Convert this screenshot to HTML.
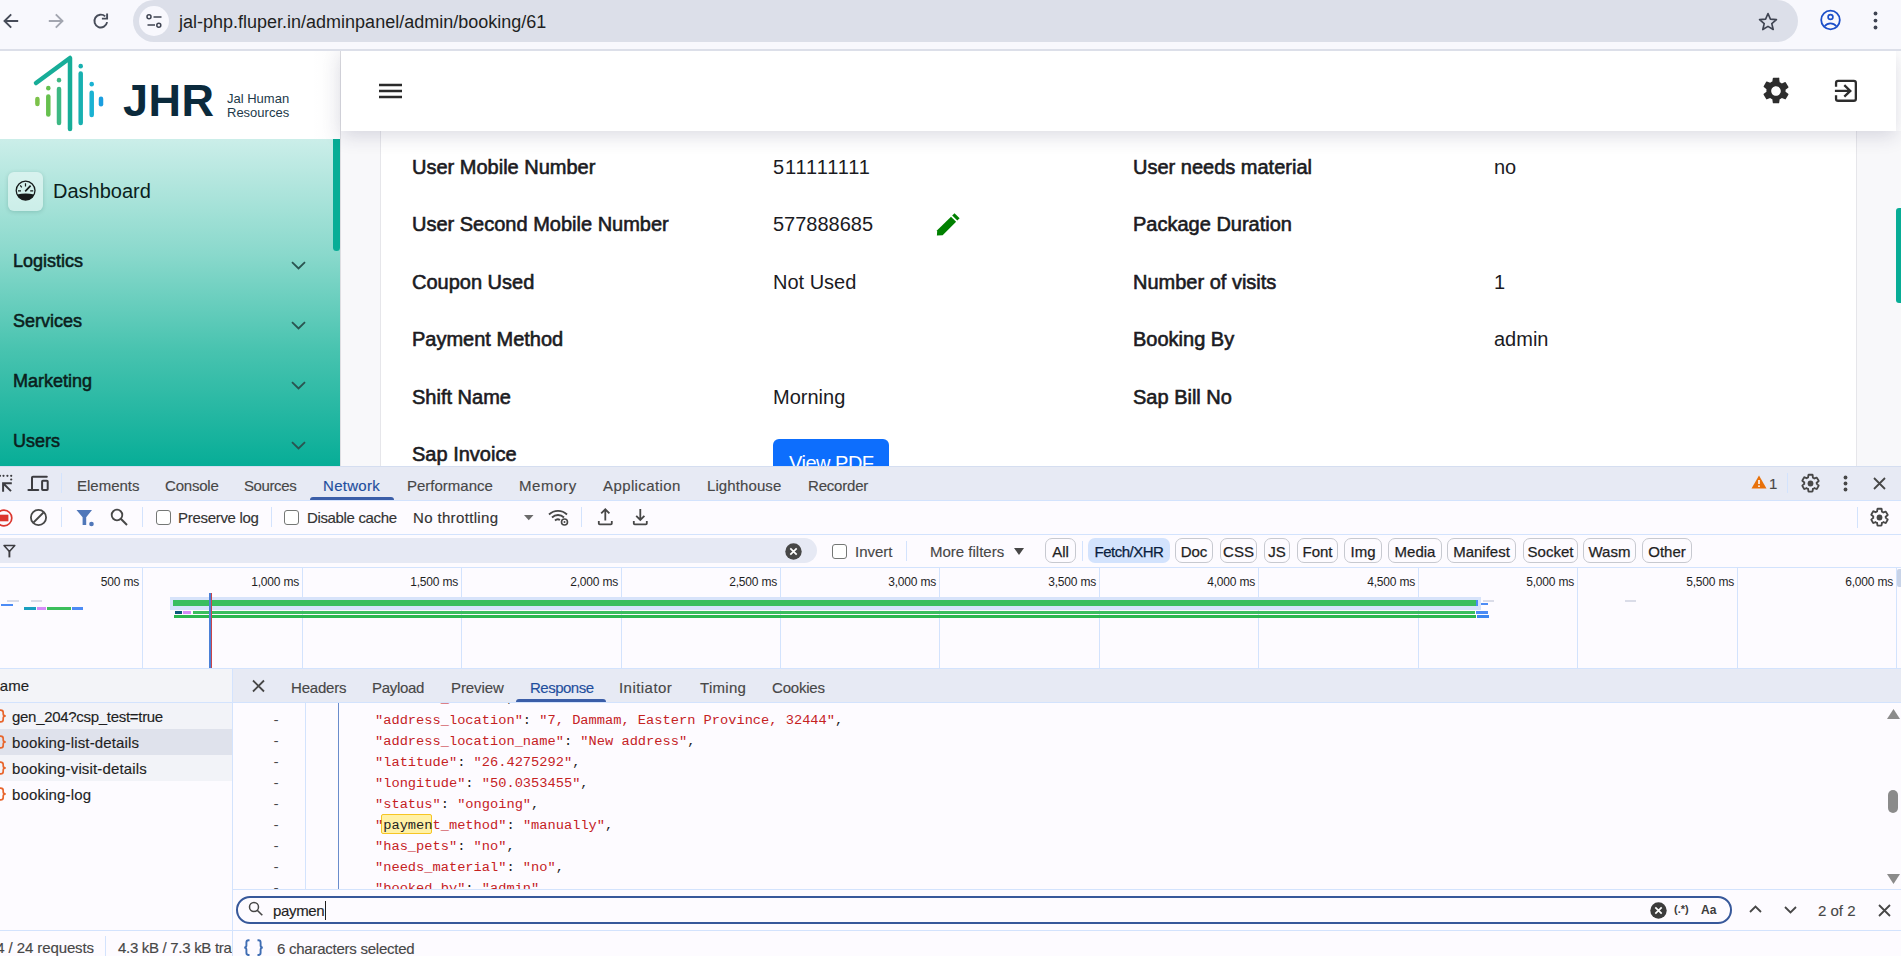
<!DOCTYPE html>
<html><head><meta charset="utf-8">
<style>
*{box-sizing:border-box}
html,body{margin:0;padding:0}
body{width:1901px;height:956px;position:relative;overflow:hidden;background:#fff;font-family:"Liberation Sans",sans-serif;color:#1f1f1f}
.a{position:absolute}
.t{position:absolute;white-space:nowrap;line-height:1}
svg{position:absolute;overflow:visible}
/* chrome */
#chrome{left:0;top:0;width:1901px;height:51px;background:#f8f8fd;border-bottom:2px solid #dcdfe9}
#pill{left:133px;top:0;width:1665px;height:42px;border-radius:21px;background:#dcdfe9}
#site{left:139px;top:6px;width:30px;height:30px;border-radius:15px;background:#f8f8fd}
/* page */
#side{left:0;top:51px;width:340px;height:415px;background:#fff}
#sidegrad{left:0;top:139px;width:340px;height:327px;background:linear-gradient(180deg,#cbeee9 0%,#8ad9cc 35%,#47c3af 65%,#07ad97 100%)}
#sidethumb{left:333px;top:139px;width:7px;height:112px;background:#08ad96;border-radius:0 0 4px 4px}
#sideborder{left:340px;top:51px;width:1px;height:415px;background:#dedee2}
#content{left:341px;top:131px;width:1560px;height:335px;background:#f8f8fa}
#header{left:341px;top:51px;width:1555px;height:80px;background:#fff;box-shadow:0 5px 18px rgba(40,40,80,.16);clip-path:inset(0 -30px -40px -30px)}
#card{left:380px;top:131px;width:1477px;height:335px;background:#fff;border-left:1px solid #e6e6ea;border-right:1px solid #e6e6ea}
#pagethumb{left:1896px;top:208px;width:5px;height:95px;background:#08ad96;border-radius:3px 0 0 3px}
.lab{font-size:20px;color:#1b1b1f;-webkit-text-stroke:0.6px #1b1b1f;margin-top:-1px}
.val{font-size:20px;color:#1b1b1f}
.nav{font-size:18px;color:#0b1e1d;-webkit-text-stroke:0.55px #0b1e1d}
/* devtools */
#dt{left:0;top:466px;width:1901px;height:490px;background:#fdfbff}
.dtt{font-size:15px;color:#474747;-webkit-text-stroke:0.15px currentColor}
.bor{background:#d3e3fd}
</style></head><body>

<!-- ============ CHROME ============ -->
<div class="a" id="chrome"></div>
<div class="a" id="pill"></div>
<div class="a" id="site"></div>
<div class="t" style="left:179px;top:13px;font-size:18px;color:#1f1f1f">jal-php.fluper.in/adminpanel/admin/booking/61</div>

<!-- chrome icons -->
<svg style="left:3px;top:12.5px" width="16" height="16" viewBox="0 0 16 16"><path d="M15.2 8H1.8M8.2 1.3L1.5 8L8.2 14.7" stroke="#474c59" stroke-width="1.9" fill="none"/></svg>
<svg style="left:47.5px;top:12.5px" width="16" height="16" viewBox="0 0 16 16"><path d="M0.8 8H14.2M7.8 1.3L14.5 8L7.8 14.7" stroke="#a3a6b0" stroke-width="1.9" fill="none"/></svg>
<svg style="left:93px;top:12.5px" width="16" height="16" viewBox="0 0 16 16"><path d="M14.1 9.2A6.4 6.4 0 1 1 12.2 3.4" stroke="#474c59" stroke-width="1.9" fill="none"/><path d="M14.1 0.4V5.6H8.9" stroke="#474c59" stroke-width="1.9" fill="none"/></svg>
<svg style="left:146px;top:14px" width="17" height="15" viewBox="0 0 17 15"><circle cx="3" cy="2.8" r="2" fill="none" stroke="#3f4452" stroke-width="1.5"/><path d="M7.5 3H15.5M1.5 11H9" stroke="#3f4452" stroke-width="1.6"/><circle cx="12.8" cy="11.3" r="2" fill="none" stroke="#3f4452" stroke-width="1.5"/></svg>
<svg style="left:1758px;top:12px" width="20" height="19" viewBox="0 0 24 23"><path d="M12 1.8L14.9 8.6L22.2 9.2L16.6 14L18.3 21.2L12 17.4L5.7 21.2L7.4 14L1.8 9.2L9.1 8.6Z" fill="none" stroke="#3f4452" stroke-width="2" stroke-linejoin="round"/></svg>
<svg style="left:1819px;top:9px" width="23" height="23" viewBox="0 0 23 23"><circle cx="11.5" cy="11" r="9.3" fill="none" stroke="#1c4fc9" stroke-width="1.8"/><circle cx="11.5" cy="8" r="2.4" fill="none" stroke="#1c4fc9" stroke-width="1.7"/><path d="M5.6 17.3C7.3 15.3 9.3 14.4 11.5 14.4S15.7 15.3 17.4 17.3" fill="none" stroke="#1c4fc9" stroke-width="1.7"/></svg>
<svg style="left:1872px;top:11px" width="7" height="20" viewBox="0 0 7 20"><circle cx="3.5" cy="2.5" r="1.9" fill="#3f4452"/><circle cx="3.5" cy="9.6" r="1.9" fill="#3f4452"/><circle cx="3.5" cy="16.5" r="1.9" fill="#3f4452"/></svg>

<!-- ============ PAGE ============ -->
<div class="a" id="side"></div>
<div class="a" id="sidegrad"></div>
<div class="a" id="sidethumb"></div>
<div class="a" style="left:310px;top:51px;width:30px;height:88px;background:linear-gradient(90deg,rgba(0,0,0,0),rgba(40,40,70,.015))"></div>
<div class="a" id="sideborder"></div>
<div class="a" id="content"></div>
<div class="a" id="card"></div>
<div class="a" id="header"></div>
<div class="a" id="pagethumb"></div>

<!-- logo svg -->
<svg style="left:0;top:50px" width="120" height="90" viewBox="0 50 120 90">
<g stroke-linecap="round" stroke-linejoin="round" fill="none" stroke-width="4.5">
<path d="M36 83L70 58V129" stroke="#17ad98"/>
<path d="M37.4 99V104" stroke="#7cc24a"/>
<path d="M48.3 88V88.2" stroke="#66c04e"/><path d="M48.3 96.5V114.5" stroke="#66c04e"/>
<path d="M59 80V80.2" stroke="#3db884"/><path d="M59 89V123" stroke="#3db884"/>
<path d="M80.7 66V66.2" stroke="#18b0b0"/><path d="M80.7 73.5V123" stroke="#18b0b0"/>
<path d="M91.7 84V84.2" stroke="#1ab2d2"/><path d="M91.7 92.7V115" stroke="#1ab2d2"/>
<path d="M101 98.8V104.3" stroke="#1a9ee0"/>
</g></svg>
<!-- logo text -->
<div class="t" style="left:123px;top:78px;font-size:45px;font-weight:bold;color:#0b2a3c;letter-spacing:0.5px">JHR</div>
<div class="t" style="left:227px;top:92px;font-size:13px;color:#223a4a">Jal Human</div>
<div class="t" style="left:227px;top:106px;font-size:13px;color:#223a4a">Resources</div>

<!-- sidebar -->
<div class="a" style="left:8px;top:172px;width:35px;height:39px;border-radius:6px;background:rgba(255,255,255,.45);box-shadow:0 1px 4px rgba(0,60,50,.18)"></div>
<div class="t" style="left:53px;top:181px;font-size:20px;color:#0b1e1d">Dashboard</div>
<div class="t nav" style="left:13px;top:252px">Logistics</div>
<div class="t nav" style="left:13px;top:312px">Services</div>
<div class="t nav" style="left:13px;top:372px">Marketing</div>
<div class="t nav" style="left:13px;top:432px">Users</div>

<!-- header icons -->
<svg style="left:378px;top:82px" width="25" height="18" viewBox="0 0 25 18"><path d="M1 3H24M1 9H24M1 15H24" stroke="#2a2a2a" stroke-width="2.5"/></svg>
<svg style="left:1760px;top:75px" width="32" height="32" viewBox="0 0 24 24"><path fill="#2d2d2d" d="M19.14 12.94c.04-.3.06-.61.06-.94s-.02-.64-.07-.94l2.03-1.58a.49.49 0 0 0 .12-.61l-1.92-3.32a.49.49 0 0 0-.59-.22l-2.39.96c-.5-.38-1.03-.7-1.62-.94l-.36-2.54A.48.48 0 0 0 13.92 2h-3.84c-.24 0-.43.17-.47.41l-.36 2.54c-.59.24-1.13.57-1.62.94l-2.39-.96a.48.48 0 0 0-.59.22L2.74 8.47c-.12.21-.08.47.12.61l2.03 1.58c-.05.3-.09.63-.09.94s.02.64.07.94l-2.03 1.58a.49.49 0 0 0-.12.61l1.92 3.32c.12.22.37.29.59.22l2.39-.96c.5.38 1.03.7 1.62.94l.36 2.54c.05.24.24.41.48.41h3.84c.24 0 .44-.17.47-.41l.36-2.54c.59-.24 1.13-.56 1.62-.94l2.39.96c.22.08.47 0 .59-.22l1.92-3.32c.12-.22.07-.47-.12-.61l-2.01-1.58zM12 15.6c-1.98 0-3.6-1.62-3.6-3.6s1.62-3.6 3.6-3.6 3.6 1.62 3.6 3.6-1.62 3.6-3.6 3.6z"/></svg>
<svg style="left:1832px;top:79px" width="27" height="25" viewBox="0 0 27 25"><path d="M2.9 11.9H18.4M12.3 6.1L18.3 11.9L12.3 17.7" stroke="#2d2d2d" stroke-width="2.3" fill="none"/><path d="M4.05 7.8V4Q4.05 1.95 6.1 1.95H21.8Q23.85 1.95 23.85 4V19.7Q23.85 21.75 21.8 21.75H6.1Q4.05 21.75 4.05 19.7V16.2" stroke="#2d2d2d" stroke-width="2.3" fill="none"/></svg>
<!-- sidebar icons -->
<svg style="left:15px;top:180px" width="22" height="22" viewBox="0 0 22 22"><circle cx="10.6" cy="10.6" r="9.4" fill="none" stroke="#161b1b" stroke-width="1.3"/><path d="M2.1 14.6Q10.6 12.4 19.1 14.6A9.4 9.4 0 0 1 2.1 14.6Z" fill="#161b1b"/><path d="M10.2 11.4L15.6 5.6" stroke="#161b1b" stroke-width="1.6"/><path d="M3 10.8H6M15.2 10.8H18.2M10.5 3.2V6.4M5.2 5.4L6.8 7.4" stroke="#161b1b" stroke-width="1.2"/></svg>
<svg style="left:291px;top:261px" width="15" height="9" viewBox="0 0 15 9"><path d="M1 1.2L7.5 7.5L14 1.2" stroke="#2a5450" stroke-width="1.8" fill="none"/></svg>
<svg style="left:291px;top:321px" width="15" height="9" viewBox="0 0 15 9"><path d="M1 1.2L7.5 7.5L14 1.2" stroke="#2a5450" stroke-width="1.8" fill="none"/></svg>
<svg style="left:291px;top:381px" width="15" height="9" viewBox="0 0 15 9"><path d="M1 1.2L7.5 7.5L14 1.2" stroke="#2a5450" stroke-width="1.8" fill="none"/></svg>
<svg style="left:291px;top:441px" width="15" height="9" viewBox="0 0 15 9"><path d="M1 1.2L7.5 7.5L14 1.2" stroke="#2a5450" stroke-width="1.8" fill="none"/></svg>
<!-- pencil -->
<svg style="left:936px;top:212px" width="25" height="24" viewBox="0 0 25 24"><path d="M18.5 1.2L23.6 6.3L21.3 8.6L16.2 3.5Z" fill="#008000"/><path d="M15 4.7L20.1 9.8L6.6 23.3L0.9 23.6L1.2 18.2Z" fill="#008000"/><path d="M1.5 21L3.4 23" stroke="#fff" stroke-width="0"/></svg>
<!-- card rows -->
<div class="t lab" style="left:412px;top:158px">User Mobile Number</div>
<div class="t val" style="left:773px;top:157px;letter-spacing:0.9px">511111111</div>
<div class="t lab" style="left:1133px;top:158px">User needs material</div>
<div class="t val" style="left:1494px;top:157px">no</div>

<div class="t lab" style="left:412px;top:215px">User Second Mobile Number</div>
<div class="t val" style="left:773px;top:214px">577888685</div>
<div class="t lab" style="left:1133px;top:215px">Package Duration</div>

<div class="t lab" style="left:412px;top:273px">Coupon Used</div>
<div class="t val" style="left:773px;top:272px">Not Used</div>
<div class="t lab" style="left:1133px;top:273px">Number of visits</div>
<div class="t val" style="left:1494px;top:272px">1</div>

<div class="t lab" style="left:412px;top:330px">Payment Method</div>
<div class="t lab" style="left:1133px;top:330px">Booking By</div>
<div class="t val" style="left:1494px;top:329px">admin</div>

<div class="t lab" style="left:412px;top:388px">Shift Name</div>
<div class="t val" style="left:773px;top:387px">Morning</div>
<div class="t lab" style="left:1133px;top:388px">Sap Bill No</div>

<div class="t lab" style="left:412px;top:445px">Sap Invoice</div>
<div class="a" style="left:773px;top:439px;width:116px;height:40px;border-radius:6px;background:#0d6efd"></div>
<div class="t" style="left:789px;top:453px;font-size:20px;color:#fff;letter-spacing:-0.5px">View PDF</div>

<!-- ============ DEVTOOLS ============ -->
<div class="a" id="dt"></div>
<!-- main tab bar -->
<div class="a" style="left:0;top:466px;width:1901px;height:34px;background:#e7eaf4"></div>
<div class="a" style="left:0;top:466px;width:1901px;height:1px;background:#d5def0"></div>
<div class="a bor" style="left:0;top:500px;width:1901px;height:1px"></div>
<!-- inspect icon -->
<svg style="left:0;top:470px" width="16" height="24" viewBox="0 0 16 24"><g fill="#3c3c40"><circle cx="0" cy="5.8" r="1.1"/><circle cx="3.5" cy="5.8" r="1.1"/><circle cx="7.4" cy="5.8" r="1.1"/><circle cx="11.2" cy="5.8" r="1.1"/><circle cx="11.2" cy="9.5" r="1.1"/></g><path d="M11.8 13.2H3.1V21.8M3.6 13.7L11 21.1" stroke="#3c3c40" stroke-width="2" fill="none"/></svg>
<!-- device icon -->
<svg style="left:28px;top:470px" width="24" height="24" viewBox="0 0 24 24"><path d="M4 20V7.5Q4 6.8 5 6.8H18.8" stroke="#3c3c40" stroke-width="2" fill="none" stroke-linecap="round"/><path d="M0.5 20H10.2" stroke="#3c3c40" stroke-width="2.2" stroke-linecap="round"/><rect x="14.1" y="10.8" width="5.6" height="9.2" rx="0.8" stroke="#3c3c40" stroke-width="2" fill="none"/></svg>
<div class="a bor" style="left:61px;top:473px;width:1px;height:20px"></div>
<div class="t dtt" style="left:77px;top:478px">Elements</div>
<div class="t dtt" style="left:165px;top:478px;letter-spacing:-0.2px">Console</div>
<div class="t dtt" style="left:244px;top:478px;letter-spacing:-0.4px">Sources</div>
<div class="t dtt" style="left:323px;top:478px;color:#1f4f9e;letter-spacing:0.3px">Network</div>
<div class="a" style="left:310px;top:497px;width:84px;height:3px;background:#3b5ea8;border-radius:3px 3px 0 0"></div>
<div class="t dtt" style="left:407px;top:478px">Performance</div>
<div class="t dtt" style="left:519px;top:478px;letter-spacing:0.6px">Memory</div>
<div class="t dtt" style="left:603px;top:478px;letter-spacing:0.4px">Application</div>
<div class="t dtt" style="left:707px;top:478px;letter-spacing:0.1px">Lighthouse</div>
<div class="t dtt" style="left:808px;top:478px;letter-spacing:-0.2px">Recorder</div>
<!-- right icons -->
<svg style="left:1750.5px;top:475px" width="16" height="14" viewBox="0 0 16 14"><path d="M8 0.5L15.5 13.5H0.5Z" fill="#e8710a"/><path d="M8 5v4" stroke="#fff" stroke-width="1.6"/><circle cx="8" cy="11.2" r="0.9" fill="#fff"/></svg>
<div class="t dtt" style="left:1769px;top:476px">1</div>
<div class="a bor" style="left:1787px;top:473px;width:1px;height:20px"></div>
<svg style="left:1800px;top:473px" width="21" height="21" viewBox="0 0 24 24"><path fill="none" stroke="#474747" stroke-width="2.1" d="M19.14 12.94c.04-.3.06-.61.06-.94s-.02-.64-.07-.94l2.03-1.58a.49.49 0 0 0 .12-.61l-1.92-3.32a.49.49 0 0 0-.59-.22l-2.39.96c-.5-.38-1.03-.7-1.62-.94l-.36-2.54A.48.48 0 0 0 13.92 2h-3.84c-.24 0-.43.17-.47.41l-.36 2.54c-.59.24-1.13.57-1.62.94l-2.39-.96a.48.48 0 0 0-.59.22L2.74 8.47c-.12.21-.08.47.12.61l2.03 1.58c-.05.3-.09.63-.09.94s.02.64.07.94l-2.03 1.58a.49.49 0 0 0-.12.61l1.92 3.32c.12.22.37.29.59.22l2.39-.96c.5.38 1.03.7 1.62.94l.36 2.54c.05.24.24.41.48.41h3.84c.24 0 .44-.17.47-.41l.36-2.54c.59-.24 1.13-.56 1.62-.94l2.39.96c.22.08.47 0 .59-.22l1.92-3.32c.12-.22.07-.47-.12-.61l-2.01-1.58z"/><circle cx="12" cy="12" r="3.3" fill="#474747"/></svg>
<svg style="left:1843px;top:475px" width="5" height="17" viewBox="0 0 5 17"><circle cx="2.5" cy="2.5" r="1.9" fill="#474747"/><circle cx="2.5" cy="8.5" r="1.9" fill="#474747"/><circle cx="2.5" cy="14.5" r="1.9" fill="#474747"/></svg>
<svg style="left:1873px;top:477px" width="13" height="13" viewBox="0 0 13 13"><path d="M1 1L12 12M12 1L1 12" stroke="#474747" stroke-width="1.8"/></svg>

<!-- toolbar -->
<div class="a bor" style="left:0;top:534px;width:1901px;height:1px"></div>
<svg style="left:-5.5px;top:509px" width="18" height="18" viewBox="0 0 18 18"><circle cx="9" cy="9" r="7.8" fill="none" stroke="#dc362e" stroke-width="1.7"/><rect x="4.6" y="5.7" width="8.8" height="6.6" fill="#dc362e"/></svg>
<svg style="left:30px;top:509px" width="18" height="18" viewBox="0 0 18 18"><circle cx="8.5" cy="8.5" r="7.6" fill="none" stroke="#474747" stroke-width="1.8"/><path d="M3.5 13.5L13.5 3.5" stroke="#474747" stroke-width="1.8"/></svg>
<div class="a bor" style="left:61px;top:507px;width:1px;height:20px"></div>
<svg style="left:76px;top:509px" width="19" height="18" viewBox="0 0 19 18"><path d="M0.5 1H16L10.2 8.2V16H6.6V8.2Z" fill="#5077b9"/><circle cx="15.5" cy="15" r="2.3" fill="#5077b9"/></svg>
<svg style="left:110px;top:508px" width="18" height="18" viewBox="0 0 18 18"><circle cx="7" cy="7" r="5.3" fill="none" stroke="#474747" stroke-width="1.8"/><path d="M10.8 10.8L17 17" stroke="#474747" stroke-width="2"/></svg>
<div class="a bor" style="left:142px;top:507px;width:1px;height:20px"></div>
<div class="a" style="left:156px;top:510px;width:15px;height:15px;border:1.4px solid #747775;border-radius:3px;background:#fff"></div>
<div class="t dtt" style="left:178px;top:510px;color:#333;letter-spacing:-0.3px">Preserve log</div>
<div class="a bor" style="left:271px;top:507px;width:1px;height:20px"></div>
<div class="a" style="left:284px;top:510px;width:15px;height:15px;border:1.4px solid #747775;border-radius:3px;background:#fff"></div>
<div class="t dtt" style="left:307px;top:510px;color:#333;letter-spacing:-0.35px">Disable cache</div>
<div class="t dtt" style="left:413px;top:510px;color:#333;letter-spacing:0.35px">No throttling</div>
<svg style="left:524px;top:515px" width="10" height="6" viewBox="0 0 10 6"><path d="M0 0H9.5L4.75 5.2Z" fill="#6b6b6b"/></svg>
<svg style="left:548px;top:508px" width="22" height="18" viewBox="0 0 22 18"><path d="M1 6.5A13 13 0 0 1 19 6.5M4 9.5A8.5 8.5 0 0 1 16 9.5M7 12.5A4 4 0 0 1 12 12" stroke="#474747" stroke-width="1.8" fill="none"/><circle cx="16.5" cy="14" r="3" fill="none" stroke="#474747" stroke-width="1.6"/><circle cx="16.5" cy="14" r="1" fill="#474747"/></svg>
<div class="a bor" style="left:581px;top:507px;width:1px;height:20px"></div>
<svg style="left:596px;top:507px" width="18" height="20" viewBox="0 0 18 20"><path d="M9.3 2.6V13.6M5.2 6.4L9.3 2.3L13.4 6.4" stroke="#474747" stroke-width="1.8" fill="none"/><path d="M2.8 14V16.5Q2.8 17.4 3.7 17.4H14.9Q15.8 17.4 15.8 16.5V14" stroke="#474747" stroke-width="1.8" fill="none"/></svg>
<svg style="left:631px;top:507px" width="18" height="20" viewBox="0 0 18 20"><path d="M9.3 2V12.8M5.2 8.9L9.3 13L13.4 8.9" stroke="#474747" stroke-width="1.8" fill="none"/><path d="M2.8 14V16.5Q2.8 17.4 3.7 17.4H14.9Q15.8 17.4 15.8 16.5V14" stroke="#474747" stroke-width="1.8" fill="none"/></svg>
<div class="a bor" style="left:1857px;top:507px;width:1px;height:21px"></div>
<svg style="left:1869px;top:507px" width="21" height="21" viewBox="0 0 24 24"><path fill="none" stroke="#474747" stroke-width="2.1" d="M19.14 12.94c.04-.3.06-.61.06-.94s-.02-.64-.07-.94l2.03-1.58a.49.49 0 0 0 .12-.61l-1.92-3.32a.49.49 0 0 0-.59-.22l-2.39.96c-.5-.38-1.03-.7-1.62-.94l-.36-2.54A.48.48 0 0 0 13.92 2h-3.84c-.24 0-.43.17-.47.41l-.36 2.54c-.59.24-1.13.57-1.62.94l-2.39-.96a.48.48 0 0 0-.59.22L2.74 8.47c-.12.21-.08.47.12.61l2.03 1.58c-.05.3-.09.63-.09.94s.02.64.07.94l-2.03 1.58a.49.49 0 0 0-.12.61l1.92 3.32c.12.22.37.29.59.22l2.39-.96c.5.38 1.03.7 1.62.94l.36 2.54c.05.24.24.41.48.41h3.84c.24 0 .44-.17.47-.41l.36-2.54c.59-.24 1.13-.56 1.62-.94l2.39.96c.22.08.47 0 .59-.22l1.92-3.32c.12-.22.07-.47-.12-.61l-2.01-1.58z"/><circle cx="12" cy="12" r="3.3" fill="#474747"/></svg>

<!-- filter row -->
<div class="a bor" style="left:0;top:567px;width:1901px;height:1px"></div>
<div class="a" style="left:-20px;top:538px;width:837px;height:25px;border-radius:12.5px;background:#e6e9f4"></div>
<svg style="left:3px;top:544px" width="13" height="14" viewBox="0 0 13 14"><path d="M1 1.5H11.8L6.4 7.6Z" stroke="#3c3c40" stroke-width="1.5" fill="none" stroke-linejoin="round"/><path d="M6.4 7.2V13.4" stroke="#3c3c40" stroke-width="1.9"/></svg>
<svg style="left:785px;top:543px" width="17" height="17" viewBox="0 0 17 17"><circle cx="8.5" cy="8.5" r="8.2" fill="#474747"/><path d="M5.3 5.3L11.7 11.7M11.7 5.3L5.3 11.7" stroke="#fff" stroke-width="1.7"/></svg>
<div class="a" style="left:832px;top:544px;width:15px;height:15px;border:1.4px solid #747775;border-radius:3px;background:#fff"></div>
<div class="t dtt" style="left:855px;top:544px;color:#474747">Invert</div>
<div class="a bor" style="left:906px;top:541px;width:1px;height:20px"></div>
<div class="t dtt" style="left:930px;top:544px;color:#474747">More filters</div>
<svg style="left:1014px;top:548px" width="10" height="7" viewBox="0 0 10 7"><path d="M0 0H10L5 7Z" fill="#474747"/></svg>
<div class="a bor" style="left:1082px;top:541px;width:1px;height:20px"></div>
<div class="a" style="left:1045px;top:538px;width:31px;height:25px;border-radius:7px;border:1px solid #c7c9d0;color:#1f1f1f;font-size:15px;line-height:25px;text-align:center;-webkit-text-stroke:0.25px #1f1f1f">All</div>
<div class="a" style="left:1088px;top:538px;width:82px;height:25px;border-radius:7px;background:#d3e3fd;color:#0a1e3f;font-size:15px;line-height:27px;text-align:center;letter-spacing:-0.5px;-webkit-text-stroke:0.25px #0a1e3f">Fetch/XHR</div>
<div class="a" style="left:1175px;top:538px;width:38px;height:25px;border-radius:7px;border:1px solid #c7c9d0;color:#1f1f1f;font-size:15px;line-height:25px;text-align:center;-webkit-text-stroke:0.25px #1f1f1f">Doc</div>
<div class="a" style="left:1220px;top:538px;width:37px;height:25px;border-radius:7px;border:1px solid #c7c9d0;color:#1f1f1f;font-size:15px;line-height:25px;text-align:center;-webkit-text-stroke:0.25px #1f1f1f">CSS</div>
<div class="a" style="left:1264px;top:538px;width:26px;height:25px;border-radius:7px;border:1px solid #c7c9d0;color:#1f1f1f;font-size:15px;line-height:25px;text-align:center;-webkit-text-stroke:0.25px #1f1f1f">JS</div>
<div class="a" style="left:1297px;top:538px;width:41px;height:25px;border-radius:7px;border:1px solid #c7c9d0;color:#1f1f1f;font-size:15px;line-height:25px;text-align:center;-webkit-text-stroke:0.25px #1f1f1f">Font</div>
<div class="a" style="left:1344px;top:538px;width:38px;height:25px;border-radius:7px;border:1px solid #c7c9d0;color:#1f1f1f;font-size:15px;line-height:25px;text-align:center;-webkit-text-stroke:0.25px #1f1f1f">Img</div>
<div class="a" style="left:1388px;top:538px;width:54px;height:25px;border-radius:7px;border:1px solid #c7c9d0;color:#1f1f1f;font-size:15px;line-height:25px;text-align:center;-webkit-text-stroke:0.25px #1f1f1f">Media</div>
<div class="a" style="left:1447px;top:538px;width:69px;height:25px;border-radius:7px;border:1px solid #c7c9d0;color:#1f1f1f;font-size:15px;line-height:25px;text-align:center;-webkit-text-stroke:0.25px #1f1f1f">Manifest</div>
<div class="a" style="left:1523px;top:538px;width:55px;height:25px;border-radius:7px;border:1px solid #c7c9d0;color:#1f1f1f;font-size:15px;line-height:25px;text-align:center;-webkit-text-stroke:0.25px #1f1f1f">Socket</div>
<div class="a" style="left:1583px;top:538px;width:53px;height:25px;border-radius:7px;border:1px solid #c7c9d0;color:#1f1f1f;font-size:15px;line-height:25px;text-align:center;-webkit-text-stroke:0.25px #1f1f1f">Wasm</div>
<div class="a" style="left:1642px;top:538px;width:50px;height:25px;border-radius:7px;border:1px solid #c7c9d0;color:#1f1f1f;font-size:15px;line-height:25px;text-align:center;-webkit-text-stroke:0.25px #1f1f1f">Other</div>
<!-- timeline -->
<div class="a bor" style="left:0;top:668px;width:1901px;height:1px"></div>
<div class="a" style="left:142px;top:568px;width:1px;height:100px;background:#d3e3fd"></div>
<div class="t" style="right:1762px;top:576px;font-size:12px;color:#1f1f1f;letter-spacing:-0.2px">500 ms</div>
<div class="a" style="left:302px;top:568px;width:1px;height:100px;background:#d3e3fd"></div>
<div class="t" style="right:1602px;top:576px;font-size:12px;color:#1f1f1f;letter-spacing:-0.2px">1,000 ms</div>
<div class="a" style="left:461px;top:568px;width:1px;height:100px;background:#d3e3fd"></div>
<div class="t" style="right:1443px;top:576px;font-size:12px;color:#1f1f1f;letter-spacing:-0.2px">1,500 ms</div>
<div class="a" style="left:621px;top:568px;width:1px;height:100px;background:#d3e3fd"></div>
<div class="t" style="right:1283px;top:576px;font-size:12px;color:#1f1f1f;letter-spacing:-0.2px">2,000 ms</div>
<div class="a" style="left:780px;top:568px;width:1px;height:100px;background:#d3e3fd"></div>
<div class="t" style="right:1124px;top:576px;font-size:12px;color:#1f1f1f;letter-spacing:-0.2px">2,500 ms</div>
<div class="a" style="left:939px;top:568px;width:1px;height:100px;background:#d3e3fd"></div>
<div class="t" style="right:965px;top:576px;font-size:12px;color:#1f1f1f;letter-spacing:-0.2px">3,000 ms</div>
<div class="a" style="left:1099px;top:568px;width:1px;height:100px;background:#d3e3fd"></div>
<div class="t" style="right:805px;top:576px;font-size:12px;color:#1f1f1f;letter-spacing:-0.2px">3,500 ms</div>
<div class="a" style="left:1258px;top:568px;width:1px;height:100px;background:#d3e3fd"></div>
<div class="t" style="right:646px;top:576px;font-size:12px;color:#1f1f1f;letter-spacing:-0.2px">4,000 ms</div>
<div class="a" style="left:1418px;top:568px;width:1px;height:100px;background:#d3e3fd"></div>
<div class="t" style="right:486px;top:576px;font-size:12px;color:#1f1f1f;letter-spacing:-0.2px">4,500 ms</div>
<div class="a" style="left:1577px;top:568px;width:1px;height:100px;background:#d3e3fd"></div>
<div class="t" style="right:327px;top:576px;font-size:12px;color:#1f1f1f;letter-spacing:-0.2px">5,000 ms</div>
<div class="a" style="left:1737px;top:568px;width:1px;height:100px;background:#d3e3fd"></div>
<div class="t" style="right:167px;top:576px;font-size:12px;color:#1f1f1f;letter-spacing:-0.2px">5,500 ms</div>
<div class="a" style="left:1896px;top:568px;width:1px;height:100px;background:#d3e3fd"></div>
<div class="t" style="right:8px;top:576px;font-size:12px;color:#1f1f1f;letter-spacing:-0.2px">6,000 ms</div>

<div class="a" style="left:7px;top:600px;width:12px;height:2px;background:#dadce8"></div>
<div class="a" style="left:30.5px;top:600px;width:11.5px;height:2px;background:#dadce8"></div>
<div class="a" style="left:1px;top:603.5px;width:11.8px;height:2.5px;background:#4c8bf5"></div>
<div class="a" style="left:24px;top:607px;width:12px;height:3px;background:#1a9fbf"></div>
<div class="a" style="left:37px;top:607px;width:9px;height:3px;background:#d58cf7"></div>
<div class="a" style="left:47px;top:607px;width:24px;height:3px;background:#3cbe5c"></div>
<div class="a" style="left:72px;top:607px;width:11px;height:3px;background:#4c8bf5"></div>
<div class="a" style="left:170px;top:597px;width:1311px;height:13px;background:#d7e3fa"></div>
<div class="a" style="left:173px;top:600px;width:1304px;height:6px;background:#3abe5e"></div>
<div class="a" style="left:1476px;top:600px;width:2px;height:6px;background:#4c8bf5"></div>
<div class="a" style="left:175px;top:611px;width:7px;height:2.5px;background:#0b5a7a"></div>
<div class="a" style="left:183px;top:611px;width:8px;height:2.5px;background:#d48cf8"></div>
<div class="a" style="left:193px;top:611px;width:1282px;height:2.5px;background:#3abe5e"></div>
<div class="a" style="left:1476px;top:611px;width:12px;height:2.5px;background:#4c8bf5"></div>
<div class="a" style="left:174px;top:615px;width:1302px;height:2.5px;background:#2bb74f"></div>
<div class="a" style="left:1477px;top:615px;width:12px;height:2.5px;background:#3d86f0"></div>
<div class="a" style="left:1483px;top:600px;width:11px;height:2px;background:#dadce8"></div>
<div class="a" style="left:1481px;top:603px;width:7px;height:2px;background:#4c8bf5"></div>
<div class="a" style="left:1625px;top:600px;width:11px;height:2px;background:#dadce8"></div>
<div class="a" style="left:209px;top:593px;width:1.6px;height:75px;background:#4a80d8"></div>
<div class="a" style="left:210.6px;top:593px;width:1.6px;height:75px;background:#c8454a"></div>
<div class="a" style="left:1897px;top:569px;width:4px;height:18px;background:#c8d3e8;border-radius:2px 0 0 2px"></div>

<!-- details header -->
<div class="a" style="left:0;top:669px;width:232px;height:34px;background:#f3f4f8"></div>
<div class="a" style="left:233px;top:669px;width:1668px;height:33px;background:#e7eaf4"></div>
<div class="a bor" style="left:0;top:702px;width:1901px;height:1px"></div>
<div class="a bor" style="left:232px;top:669px;width:1px;height:287px"></div>
<div class="t dtt" style="left:-11px;top:678px;color:#1f1f1f">Name</div>
<svg style="left:252px;top:680px" width="13" height="12" viewBox="0 0 13 12"><path d="M1 0.5L12 11.5M12 0.5L1 11.5" stroke="#474747" stroke-width="1.8"/></svg>
<div class="t dtt" style="left:291px;top:680px;letter-spacing:-0.2px">Headers</div>
<div class="t dtt" style="left:372px;top:680px;letter-spacing:-0.3px">Payload</div>
<div class="t dtt" style="left:451px;top:680px;letter-spacing:-0.1px">Preview</div>
<div class="t dtt" style="left:530px;top:680px;color:#1f4f9e;letter-spacing:-0.5px">Response</div>
<div class="a" style="left:516px;top:699px;width:90px;height:3px;background:#3b5ea8;border-radius:3px 3px 0 0"></div>
<div class="t dtt" style="left:619px;top:680px;letter-spacing:0.45px">Initiator</div>
<div class="t dtt" style="left:700px;top:680px;letter-spacing:0.3px">Timing</div>
<div class="t dtt" style="left:772px;top:680px;letter-spacing:-0.2px">Cookies</div>

<!-- request rows -->
<div class="a" style="left:0;top:703px;width:232px;height:26px;background:#f2f3f8"></div>
<div class="a" style="left:0;top:729px;width:232px;height:26px;background:#dfe2ec"></div>
<div class="a" style="left:0;top:755px;width:232px;height:26px;background:#f2f3f8"></div>
<svg style="left:-1px;top:709px" width="10" height="14" viewBox="0 0 10 14"><path d="M0 1.2H1.6Q4.2 1.2 4.2 3.6V5Q4.2 7 6.8 7Q4.2 7 4.2 9V10.4Q4.2 12.8 1.6 12.8H0" stroke="#e8652c" stroke-width="1.7" fill="none"/></svg>
<div class="t dtt" style="left:12px;top:709px;color:#1f1f1f;letter-spacing:-0.3px">gen_204?csp_test=true</div>
<svg style="left:-1px;top:735px" width="10" height="14" viewBox="0 0 10 14"><path d="M0 1.2H1.6Q4.2 1.2 4.2 3.6V5Q4.2 7 6.8 7Q4.2 7 4.2 9V10.4Q4.2 12.8 1.6 12.8H0" stroke="#e8652c" stroke-width="1.7" fill="none"/></svg>
<div class="t dtt" style="left:12px;top:735px;color:#1f1f1f;letter-spacing:0.15px">booking-list-details</div>
<svg style="left:-1px;top:761px" width="10" height="14" viewBox="0 0 10 14"><path d="M0 1.2H1.6Q4.2 1.2 4.2 3.6V5Q4.2 7 6.8 7Q4.2 7 4.2 9V10.4Q4.2 12.8 1.6 12.8H0" stroke="#e8652c" stroke-width="1.7" fill="none"/></svg>
<div class="t dtt" style="left:12px;top:761px;color:#1f1f1f;letter-spacing:0.15px">booking-visit-details</div>
<svg style="left:-1px;top:787px" width="10" height="14" viewBox="0 0 10 14"><path d="M0 1.2H1.6Q4.2 1.2 4.2 3.6V5Q4.2 7 6.8 7Q4.2 7 4.2 9V10.4Q4.2 12.8 1.6 12.8H0" stroke="#e8652c" stroke-width="1.7" fill="none"/></svg>
<div class="t dtt" style="left:12px;top:787px;color:#1f1f1f;letter-spacing:0.15px">booking-log</div>
<!-- code -->
<div class="a" style="left:305px;top:703px;width:1px;height:186px;background:#d3e3fd"></div>
<div class="a" style="left:338px;top:703px;width:1.2px;height:186px;background:#6a8ccc"></div>
<div class="a" style="left:233px;top:703px;width:1654px;height:186px;overflow:hidden">
<div class="t" style="left:142px;top:-11.5px;font-family:'Liberation Mono';font-size:13.7px;color:#c5221f">"address_id"<span style="color:#1f1f1f">:</span> 12<span style="color:#1f1f1f">,</span></div>
<div class="t" style="left:39px;top:10.9px;font-family:'Liberation Mono';font-size:13.7px;color:#474747">-</div>
<div class="t" style="left:142px;top:10.9px;font-family:'Liberation Mono';font-size:13.7px;color:#c5221f">"address_location"<span style="color:#1f1f1f">:</span> "7, Dammam, Eastern Province, 32444"<span style="color:#1f1f1f">,</span></div>
<div class="t" style="left:39px;top:31.9px;font-family:'Liberation Mono';font-size:13.7px;color:#474747">-</div>
<div class="t" style="left:142px;top:31.9px;font-family:'Liberation Mono';font-size:13.7px;color:#c5221f">"address_location_name"<span style="color:#1f1f1f">:</span> "New address"<span style="color:#1f1f1f">,</span></div>
<div class="t" style="left:39px;top:52.9px;font-family:'Liberation Mono';font-size:13.7px;color:#474747">-</div>
<div class="t" style="left:142px;top:52.9px;font-family:'Liberation Mono';font-size:13.7px;color:#c5221f">"latitude"<span style="color:#1f1f1f">:</span> "26.4275292"<span style="color:#1f1f1f">,</span></div>
<div class="t" style="left:39px;top:73.9px;font-family:'Liberation Mono';font-size:13.7px;color:#474747">-</div>
<div class="t" style="left:142px;top:73.9px;font-family:'Liberation Mono';font-size:13.7px;color:#c5221f">"longitude"<span style="color:#1f1f1f">:</span> "50.0353455"<span style="color:#1f1f1f">,</span></div>
<div class="t" style="left:39px;top:94.9px;font-family:'Liberation Mono';font-size:13.7px;color:#474747">-</div>
<div class="t" style="left:142px;top:94.9px;font-family:'Liberation Mono';font-size:13.7px;color:#c5221f">"status"<span style="color:#1f1f1f">:</span> "ongoing"<span style="color:#1f1f1f">,</span></div>
<div class="t" style="left:39px;top:115.9px;font-family:'Liberation Mono';font-size:13.7px;color:#474747">-</div>
<div class="a" style="left:148px;top:111.0px;width:51px;height:20px;background:#fff1a6;border:1px solid #f6c524;border-radius:2px"></div>
<div class="t" style="left:142px;top:115.9px;font-family:'Liberation Mono';font-size:13.7px;color:#c5221f">"<span style="color:#1f1f1f">paymen</span>t_method"<span style="color:#1f1f1f">:</span> "manually"<span style="color:#1f1f1f">,</span></div>
<div class="t" style="left:39px;top:136.9px;font-family:'Liberation Mono';font-size:13.7px;color:#474747">-</div>
<div class="t" style="left:142px;top:136.9px;font-family:'Liberation Mono';font-size:13.7px;color:#c5221f">"has_pets"<span style="color:#1f1f1f">:</span> "no"<span style="color:#1f1f1f">,</span></div>
<div class="t" style="left:39px;top:157.9px;font-family:'Liberation Mono';font-size:13.7px;color:#474747">-</div>
<div class="t" style="left:142px;top:157.9px;font-family:'Liberation Mono';font-size:13.7px;color:#c5221f">"needs_material"<span style="color:#1f1f1f">:</span> "no"<span style="color:#1f1f1f">,</span></div>
<div class="t" style="left:39px;top:178.9px;font-family:'Liberation Mono';font-size:13.7px;color:#474747">-</div>
<div class="t" style="left:142px;top:178.9px;font-family:'Liberation Mono';font-size:13.7px;color:#c5221f">"booked_by"<span style="color:#1f1f1f">:</span> "admin"<span style="color:#1f1f1f">,</span></div>
</div>
<svg style="left:1887px;top:709px" width="13" height="10" viewBox="0 0 13 10"><path d="M6.5 0L13 10H0Z" fill="#8b8b8b"/></svg>
<div class="a" style="left:1888px;top:790px;width:10px;height:23px;border-radius:5px;background:#8b8b8b"></div>
<svg style="left:1887px;top:874px" width="13" height="10" viewBox="0 0 13 10"><path d="M0 0H13L6.5 10Z" fill="#8b8b8b"/></svg>

<!-- search bar -->
<div class="a bor" style="left:233px;top:889px;width:1668px;height:1px"></div>
<div class="a" style="left:236px;top:896px;width:1496px;height:27.5px;border:2.5px solid #37589a;border-radius:14px;background:#fdfbff"></div>
<svg style="left:248px;top:901px" width="16" height="16" viewBox="0 0 16 16"><circle cx="6" cy="6" r="4.5" fill="none" stroke="#474747" stroke-width="1.5"/><path d="M9.2 9.2L14.3 14.3" stroke="#474747" stroke-width="1.6"/></svg>
<div class="t dtt" style="left:273px;top:903px;color:#1f1f1f;letter-spacing:-0.35px">paymen</div>
<div class="a" style="left:325px;top:901px;width:1.3px;height:19px;background:#1f1f1f"></div>
<svg style="left:1650px;top:902px" width="17" height="17" viewBox="0 0 17 17"><circle cx="8.5" cy="8.5" r="8.2" fill="#3c3c3c"/><path d="M5.3 5.3L11.7 11.7M11.7 5.3L5.3 11.7" stroke="#fff" stroke-width="1.7"/></svg>
<div class="t" style="left:1674px;top:904px;font-size:11px;font-weight:bold;color:#3c3c3c">(.*)</div>
<div class="t" style="left:1701px;top:904px;font-size:12px;font-weight:bold;color:#3c3c3c">Aa</div>
<svg style="left:1749px;top:905px" width="13" height="8" viewBox="0 0 13 8"><path d="M1 7L6.5 1.5L12 7" stroke="#474747" stroke-width="1.8" fill="none"/></svg>
<svg style="left:1784px;top:906px" width="13" height="8" viewBox="0 0 13 8"><path d="M1 1L6.5 6.5L12 1" stroke="#474747" stroke-width="1.8" fill="none"/></svg>
<div class="t dtt" style="left:1818px;top:902.5px;color:#474747">2 of 2</div>
<svg style="left:1878px;top:904px" width="13" height="13" viewBox="0 0 13 13"><path d="M1 1L12 12M12 1L1 12" stroke="#474747" stroke-width="1.8"/></svg>

<!-- status bar -->
<div class="a bor" style="left:0;top:930px;width:1901px;height:1px"></div>
<div class="t dtt" style="right:1807px;top:940px;color:#474747;letter-spacing:-0.1px">14 / 24 requests</div>
<div class="a bor" style="left:105px;top:936px;width:1px;height:20px"></div>
<div class="a" style="left:0;top:931px;width:232px;height:25px;overflow:hidden"><div class="t dtt" style="left:118px;top:9px;color:#474747;letter-spacing:-0.3px">4.3 kB / 7.3 kB transferred</div></div>
<svg style="left:243px;top:939px" width="22" height="18" viewBox="0 0 22 18"><path d="M6.5 1.2H5.6Q3.4 1.2 3.4 3.4V6.6Q3.4 8.6 1.2 8.6Q3.4 8.6 3.4 10.6V13.8Q3.4 16 5.6 16H6.5M14.5 1.2H15.4Q17.6 1.2 17.6 3.4V6.6Q17.6 8.6 19.8 8.6Q17.6 8.6 17.6 10.6V13.8Q17.6 16 15.4 16H14.5" stroke="#3f6db3" stroke-width="1.9" fill="none"/></svg>
<div class="t dtt" style="left:277px;top:941px;color:#474747;letter-spacing:-0.25px">6 characters selected</div>
</body></html>
